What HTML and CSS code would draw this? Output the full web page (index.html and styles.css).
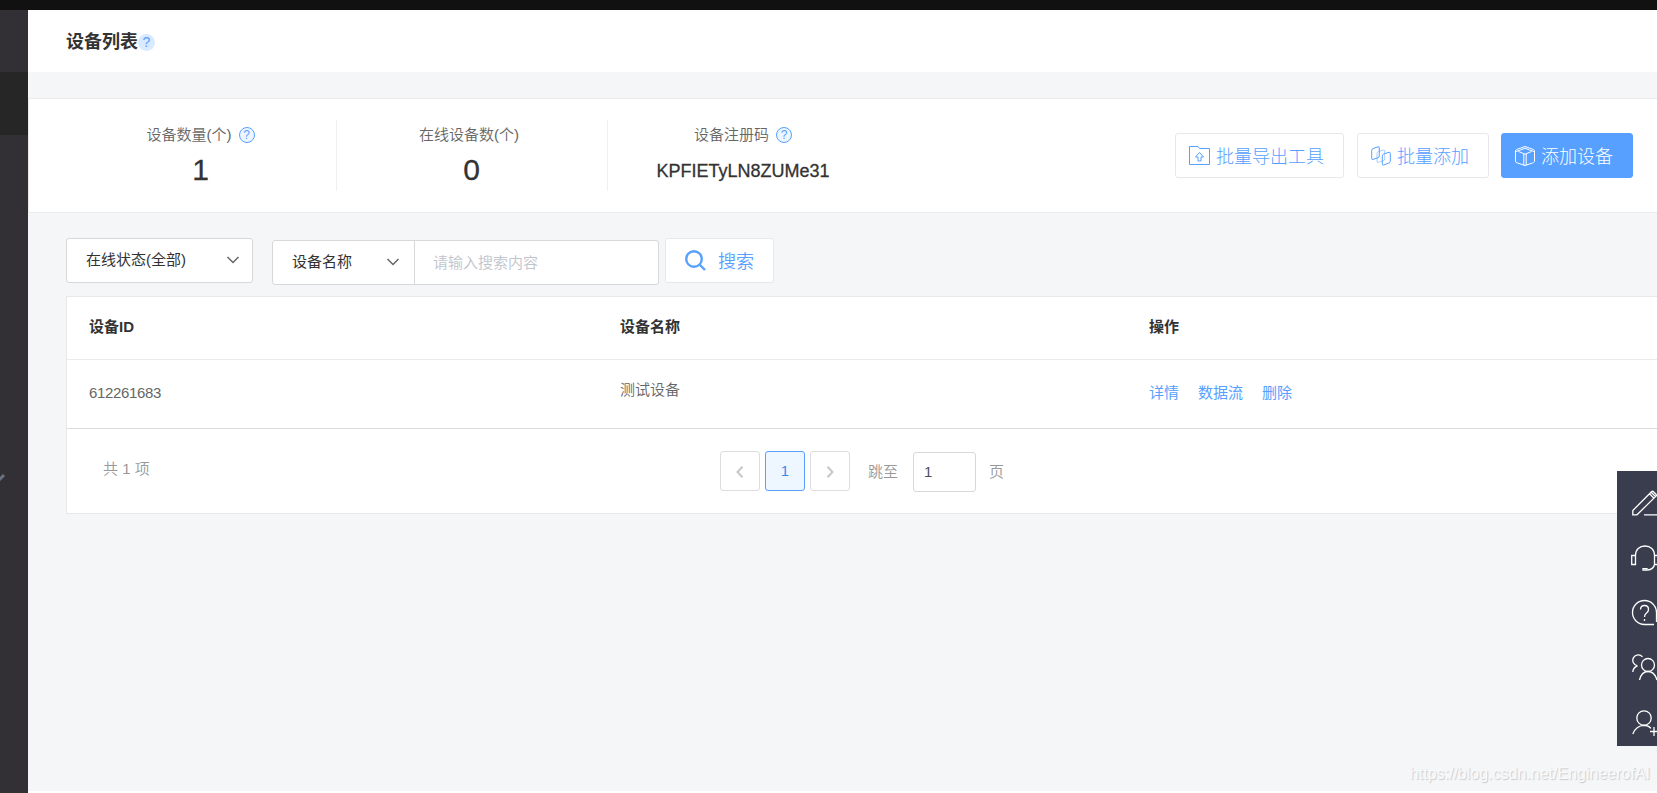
FILE: index.html
```html
<!doctype html>
<html lang="zh-CN">

<head>
	<title>设备列表</title>
	<meta charset="UTF-8">
	<link rel="stylesheet" href="styles.css">
</head>

<body>

<div class="topbar"></div>

<div class="layout">

	<div class="sidebar">
		<div class="sidebar-active"></div>
		<svg class="sidebar-arrow" width="6" height="10" viewBox="0 0 6 10"><path d="M-1 8L4 3" /></svg>
	</div>

	<div class="main">

		<div class="page-header">
			<h1>设备列表</h1><span class="help-dot">?</span>
		</div>

		<!-- 统计 -->
		<div class="summary">
			<div class="stat">
				<div class="stat-label">设备数量(个) <span class="help">?</span></div>
				<div class="stat-value">1</div>
			</div>
			<div class="stat">
				<div class="stat-label stat-online">在线设备数(个)</div>
				<div class="stat-value">0</div>
			</div>
			<div class="stat">
				<div class="stat-label">设备注册码 <span class="help">?</span></div>
				<div class="stat-value stat-code">KPFIETyLN8ZUMe31</div>
			</div>
			<div class="actions">
				<a class="btn btn-export">
					<svg width="21" height="20" viewBox="0 0 21 20"><path d="M.5 18.500V.5H9l1.500 2H20.500v16z" /><path d="M10.500 6.500l-4 4.500h2.500v4h3v-4h2.500z" /></svg>
					<span>批量导出工具</span>
				</a>
				<a class="btn btn-batch">
					<svg width="20" height="20" viewBox="0 0 20 20"><path d="M.7 4.500Q.7 3 2 2.600L7 .8Q8.300.5 8.300 2v8q0 1.300-1.300 1.700L2 13.400Q.7 13.700.7 12.500z" /><path class="faint" d="M6 7.500Q6 6 7.300 5.600L12.200 4Q13.700 3.700 13.700 5v8q0 1.300-1.400 1.700L7.300 16.300Q6 16.700 6 15.200z" /><path d="M11.300 10q0-1.500 1.300-2L18 6.300q1.300-.4 1.300 1v8q0 1.300-1.300 1.700L12.600 19q-1.300.3-1.300-1z" /></svg>
					<span>批量添加</span>
				</a>
				<a class="btn btn-primary">
					<svg width="20" height="20" viewBox="0 0 20 20"><path d="M10 .5L18.500 3.500Q19.500 4 19.500 5v10.500Q19 16.500 17.500 17L10 19.500 2.500 17Q.5 16.500.5 15.500V5Q.5 4 1.500 3.500z" /><path d="M1 5.500L5.500 4 10 2.200 14.500 4 19 5.500M3.500 5.500L10 8.200l6.500-2.700M8.800 8v11.300M11.200 8v11.300" /></svg>
					<span>添加设备</span>
				</a>
			</div>
		</div>

		<!-- 筛选 -->
		<div class="filters">
			<div class="select select-status">
				<span>在线状态(全部)</span>
				<svg width="12" height="8" viewBox="0 0 12 8"><path d="M.5 1L6 6.500 11.500 1" /></svg>
			</div>
			<div class="search-group">
				<div class="select select-field">
					<span>设备名称</span>
					<svg width="12" height="8" viewBox="0 0 12 8"><path d="M.5 1L6 6.500 11.500 1" /></svg>
				</div>
				<input class="search-input" type="text" placeholder="请输入搜索内容">
			</div>
			<a class="btn-search">
				<svg width="21" height="21" viewBox="0 0 21 21"><circle cx="9" cy="9" r="7.800" /><path d="M14.500 14.500L20 20" /></svg>
				<span>搜索</span>
			</a>
		</div>

		<!-- 设备列表 -->
		<div class="list">
			<table class="device-table">
				<tr>
					<th class="col-id">设备ID</th>
					<th class="col-name">设备名称</th>
					<th class="col-op">操作</th>
				</tr>
				<tr>
					<td><span class="num">612261683</span></td>
					<td><span class="device-name">测试设备</span></td>
					<td><a>详情</a><a>数据流</a><a>删除</a></td>
				</tr>
			</table>
			<div class="pagination">
				<div class="total">共 1 项</div>
				<div class="pager">
					<span class="page"><svg width="8" height="12" viewBox="0 0 8 12"><path d="M6.500.7L1.500 6l5 5.300" /></svg></span>
					<span class="page page-current">1</span>
					<span class="page"><svg width="8" height="12" viewBox="0 0 8 12"><path d="M1.500.7L6.500 6l-5 5.300" /></svg></span>
				</div>
				<span class="jump">跳至</span>
				<input class="jump-input" type="text" value="1">
				<span class="jump">页</span>
			</div>
		</div>

	</div>
</div>

<div class="toolbar">
	<div class="tool"><svg width="30" height="26" viewBox="0 0 30 26"><path d="M.8 24.800V20.500L19.500 1.800Q20.500.8 21.500 1.800L24 4.300q.8 1 0 1.800L5 24.800zM17.500 3.800l4.500 4.500M19.200 2.200l4.500 4.500M12 24.800h18" /></svg></div>
	<div class="tool"><svg width="30" height="26" viewBox="1 0 30 26"><path d="M4.500 10.500C4.500 4.500 8.500 1 14 1S23.500 4.500 23.500 10.500M.7 10.500H4.500v9H.7zM23.500 10.500h3.800v9h-3.800zM23.500 19.500q-1 5-7 5.500" /><path d="M12 23.700h4v1.500h-4z" /></svg></div>
	<div class="tool"><svg width="30" height="26" viewBox="0 0 30 26"><path d="M22 24.500H12.500A12 12 0 1 1 24.500 12.500V22M8.500 9.500Q8.500 5.500 12.500 5.500t4 4q0 2-2 3.500t-2 4M12.500 19v2" /></svg></div>
	<div class="tool"><svg width="30" height="26" viewBox="0 0 30 26"><circle cx="16" cy="10" r="6.500" /><path d="M7.500 25Q9.500 16.500 16 16.500T25 25M10.500 1.800A5.500 5.500 0 1 0 5.500 10.800M5.500 10.800Q1 12.500.8 17" /></svg></div>
	<div class="tool"><svg width="30" height="26" viewBox="0 0 30 26"><circle cx="12" cy="8" r="7.200" /><path d="M.8 24Q4 15.500 12 15.300q4.500 0 7 3M22 17v9M18 21.500h9" /></svg></div>
</div>

<div class="watermark">https://blog.csdn.net/EngineerofAI</div>

</body>
</html>
```

FILE: styles.css
```css
* { box-sizing: border-box; }
body { margin: 0; height: 793px; overflow: hidden; position: relative; background-color: #f4f6f8; color: #333333; font-family: "Liberation Sans", "Noto Sans CJK SC", sans-serif; font-size: 15px; font-weight: 350; line-height: 20px; }
svg { display: block; flex: none; overflow: visible; fill: none; stroke: currentColor; }
input { font-family: inherit; font-size: 15px; font-weight: 350; outline: none; }

.topbar { height: 10px; background-color: #111111; }
.layout { display: flex; height: 783px; }
.sidebar { width: 28px; flex: none; padding-top: 62px; background-color: #323035; }
.sidebar-active { height: 63px; background-color: #262626; }
.sidebar-arrow { margin-top: 337px; color: #6a7180; stroke-width: 3; overflow: hidden; }
.main { flex: 1; min-width: 0; border-bottom: 2px solid #ffffff; }

.page-header { display: flex; align-items: center; height: 62px; padding-left: 38px; background-color: #ffffff; }
.page-header h1 { margin: 2px 0 0 0; font-size: 18px; line-height: 24px; font-weight: bold; }
.help-dot { width: 17px; height: 17px; margin-top: 2px; border-radius: 50%; background-color: #d9eaff; color: #57a0ff; font-size: 14px; line-height: 17px; text-align: center; }

.summary { display: flex; height: 115px; margin-top: 26px; padding: 21px 24px 0 37px; border: 1px solid #ebebeb; border-right: 0; background-color: #ffffff; }
.stat { width: 271px; height: 71px; border-right: 1px solid #f0f0f2; text-align: center; }
.stat:nth-child(3) { border-right: 0; }
.stat-label { display: flex; justify-content: center; align-items: center; height: 30px; padding-right: 1px; color: #666666; }
.stat-online { padding-right: 6px; }
.help { width: 16px; height: 16px; margin-left: 7px; border: 1px solid #57a0ff; border-radius: 50%; background-color: #edf5ff; color: #57a0ff; font-size: 12px; line-height: 15px; }
.stat-value { height: 40px; padding-right: 1px; font-size: 30px; line-height: 40px; -webkit-text-stroke: 0.3px #333333; }
.stat-code { font-size: 18px; line-height: 42px; }
.actions { display: flex; margin-left: auto; padding-top: 13px; }
.btn { display: flex; align-items: center; height: 45px; padding-left: 13px; border: 1px solid #e8e8ea; border-radius: 3px; color: #57a0ff; font-size: 18px; font-weight: 300; white-space: nowrap; }
.btn svg { margin-right: 6px; }
.btn span, .btn-search span { padding-top: 2px; }
.btn-export { width: 169px; margin-right: 13px; }
.btn-batch { width: 132px; margin-right: 12px; }
.btn-batch .faint { opacity: 0.5; }
.btn-primary { width: 132px; border-color: #57a0ff; background-color: #57a0ff; color: #ffffff; }

.filters { display: flex; height: 83px; padding: 25px 0 0 38px; }
.select { display: flex; align-items: center; justify-content: space-between; height: 45px; padding: 0 13px 1px 19px; border: 1px solid #d8d8da; border-radius: 3px; background-color: #ffffff; font-weight: 400; }
.select svg { color: #666666; stroke-width: 1.5; }
.select-status { width: 187px; }
.search-group { display: flex; margin: 2px 6px 0 19px; }
.select-field { width: 143px; padding: 0 15px 2px 19px; border-radius: 3px 0 0 3px; }
.search-input { width: 245px; height: 45px; margin-left: -1px; padding: 0 18px 1px; border: 1px solid #d8d8da; border-radius: 0 3px 3px 0; }
.search-input::placeholder { color: #c0c4cc; }
.btn-search { display: flex; align-items: center; width: 109px; height: 45px; padding-left: 19px; border: 1px solid #e8e8ea; border-radius: 3px; background-color: #ffffff; color: #57a0ff; font-size: 18px; }
.btn-search svg { margin-right: 12px; stroke-width: 2.4; }

.list { margin-left: 38px; height: 218px; border: 1px solid #e8e8ea; border-right: 0; background-color: #ffffff; }
.device-table { width: 100%; border-collapse: collapse; table-layout: fixed; }
.device-table th { height: 62px; padding: 0 0 1px 22px; border-bottom: 1px solid #ebebeb; text-align: left; }
.device-table td { height: 69px; padding: 0 0 1px 22px; border-bottom: 1px solid #dcdcdf; color: #666666; }
.device-table .col-id { width: 531px; }
.device-table .col-name { width: 529px; }
.device-table a { margin-right: 19px; color: #57a0ff; font-weight: 400; }
.num { letter-spacing: -0.34px; }
.device-name { display: block; margin-top: -6px; }

.pagination { display: flex; padding: 22px 0 0 36px; color: #999999; }
.total { width: 617px; padding-top: 8px; }
.pager { display: flex; gap: 5px; margin-right: 18px; }
.page { display: flex; align-items: center; justify-content: center; width: 40px; height: 40px; border: 1px solid #dddddd; border-radius: 3px; }
.page svg { margin-top: 3px; color: #c8c8c8; stroke-width: 2; }
.page-current { border-color: #57a0ff; background-color: #eef6ff; color: #3b8cf0; }
.jump { padding-top: 11px; }
.jump-input { width: 63px; height: 40px; margin: 1px 13px 0 15px; padding: 0 10px 1px; border: 1px solid #d8d8da; border-radius: 3px; color: #4a4f60; }

.toolbar { position: absolute; top: 471px; right: 0; width: 40px; height: 275px; overflow: hidden; background-color: #393d4d; color: #ffffff; }
.tool { height: 55px; padding: 19px 0 0 15px; }
.tool svg { stroke-width: 1.3; }

.watermark { position: absolute; top: 764px; right: 7px; color: #f9fafb; font-size: 16px; text-shadow: 1px 1px 1px #c8cacc; }
```
